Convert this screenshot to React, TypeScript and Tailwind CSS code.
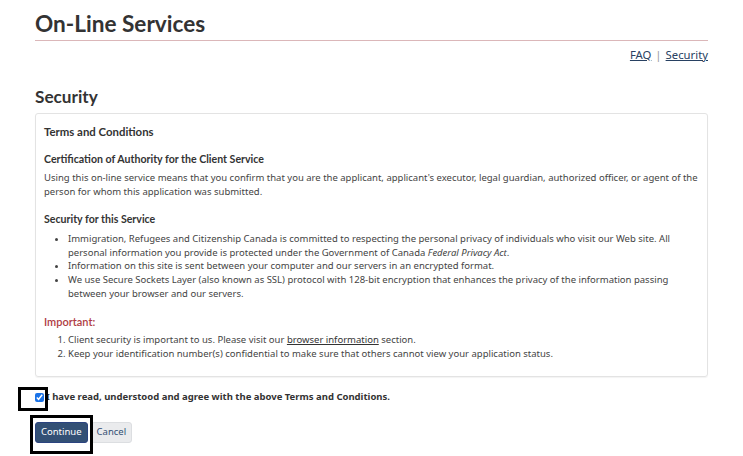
import React from "react";

export default function App() {
  const body = { fontFamily: '"Noto Sans", "Open Sans", sans-serif' };
  const lato = { fontFamily: 'Lato, sans-serif' };
  return (
    <div className="relative w-[743px] h-[456px] bg-white text-[#333] overflow-hidden" style={body}>
      <div className="px-[35px] pt-[10px]">
        <h1 className="text-[22.6px] font-bold leading-[28px] text-[#333]" style={lato}>On-Line Services</h1>
        <div className="mt-[2px] h-px bg-[#dbb7b9]" />
        <div className="flex justify-end mt-[6px] text-[11.3px] leading-[16px]">
          <a className="underline text-[#284162]">FAQ</a>
          <span className="mx-[4px] text-[#999]">|</span>
          <a className="underline text-[#284162]">Security</a>
        </div>
        <h2 className="mt-[23px] text-[17.2px] font-bold leading-[22px] text-[#333]" style={lato}>Security</h2>
        <div className="mt-[5px] h-[264px] border border-[#e3e3e3] rounded-[3px] shadow-[0_1px_1px_rgba(0,0,0,0.05)] px-[8px] pt-[11px] text-[9.5px] leading-[13.6px] text-[#444]">
          <h3 className="text-[11.4px] font-bold leading-[14px] text-[#333]" style={lato}>Terms and Conditions</h3>
          <h4 className="mt-[13px] text-[10.6px] font-bold leading-[14px] text-[#333]" style={lato}>Certification of Authority for the Client Service</h4>
          <p className="mt-[5px]">
            Using this on-line service means that you confirm that you are the applicant, applicant's executor, legal guardian, authorized officer, or agent of the person for whom this application was submitted.
          </p>
          <h4 className="mt-[14px] text-[10.6px] font-bold leading-[14px] text-[#333]" style={lato}>Security for this Service</h4>
          <ul className="mt-[6px] list-disc pl-[24px]">
            <li>Immigration, Refugees and Citizenship Canada is committed to respecting the personal privacy of individuals who visit our Web site. All personal information you provide is protected under the Government of Canada <i>Federal Privacy Act</i>.</li>
            <li>Information on this site is sent between your computer and our servers in an encrypted format.</li>
            <li>We use Secure Sockets Layer (also known as SSL) protocol with 128-bit encryption that enhances the privacy of the information passing between your browser and our servers.</li>
          </ul>
          <h4 className="mt-[15px] text-[11px] font-semibold leading-[14px] text-[#af3c43]" style={lato}>Important:</h4>
          <ol className="mt-[4px] list-decimal pl-[24px]">
            <li>Client security is important to us. Please visit our <a className="underline text-[#333]">browser information</a> section.</li>
            <li>Keep your identification number(s) confidential to make sure that others cannot view your application status.</li>
          </ol>
        </div>
        <div className="flex items-center mt-[12px] h-[16px]">
          <input type="checkbox" defaultChecked className="w-[9px] h-[9px] ml-0 mr-[2px] accent-[#1a73e8]" />
          <span className="text-[9.5px] font-bold text-[#333]">I have read, understood and agree with the above Terms and Conditions.</span>
        </div>
        <div className="flex mt-[17px] gap-[3px]">
          <button className="h-[21px] px-[5px] rounded-[3px] bg-[#335075] text-white text-[9.5px] border border-[#2b4380]">Continue</button>
          <button className="h-[21px] px-[5px] rounded-[3px] bg-[#eaebed] text-[#335075] text-[9.5px] border border-[#dcdee1]">Cancel</button>
        </div>
      </div>
      <div className="absolute left-[18px] top-[387px] w-[30px] h-[24px] border-[3px] border-black" />
      <div className="absolute left-[30px] top-[415px] w-[63px] h-[39px] border-[3px] border-black" />
    </div>
  );
}
